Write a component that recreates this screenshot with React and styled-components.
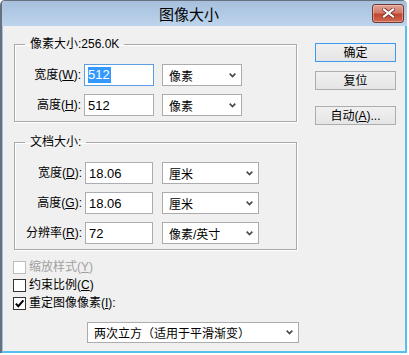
import React from "react";
import styled, { createGlobalStyle } from "styled-components";

const GlobalStyle = createGlobalStyle`
  body {
    margin: 0;
    background: #ffffff;
    font-family: "Liberation Sans", "Noto Sans CJK SC", sans-serif;
    font-size: 12px;
    color: #000;
  }
`;

const Chevron = () => (
  <svg width="7" height="5" viewBox="0 0 7 5">
    <path d="M0.7 0.7 L3.5 3.6 L6.3 0.7" fill="none" stroke="#4a4a4a" strokeWidth="1.7" />
  </svg>
);

const CloseX = () => (
  <svg width="13" height="10" viewBox="0 0 13 10">
    <path d="M2 1.5 L11 8.5 M11 1.5 L2 8.5" stroke="#6b2a22" strokeWidth="3.6" strokeLinecap="square" />
    <path d="M2 1.5 L11 8.5 M11 1.5 L2 8.5" stroke="#ffffff" strokeWidth="2.2" strokeLinecap="square" />
  </svg>
);

const Tick = () => (
  <svg width="11" height="11" viewBox="0 0 11 11">
    <path d="M1.8 5.6 L4.3 8.2 L9.4 2.4" fill="none" stroke="#000" strokeWidth="2" />
  </svg>
);

const App = () => {
  return (
    <>
      <GlobalStyle />
      <Window>
        <TitleBar>
          <Title>图像大小</Title>
          <CloseButton>
            <CloseX />
          </CloseButton>
        </TitleBar>
        <Body>
          <LeftCol>
            <Group>
              <Legend>像素大小:256.0K</Legend>
              <Row>
                <Label $w={66}>
                  宽度(<U>W</U>):
                </Label>
                <TextBox $w={70} $focused>
                  <Selected>512</Selected>
                </TextBox>
                <Select $w={80} $ml={8}>
                  <span>像素</span>
                  <Chevron />
                </Select>
              </Row>
              <Row>
                <Label $w={66}>
                  高度(<U>H</U>):
                </Label>
                <TextBox $w={70}>512</TextBox>
                <Select $w={80} $ml={8}>
                  <span>像素</span>
                  <Chevron />
                </Select>
              </Row>
            </Group>

            <Group $mt={12}>
              <Legend>文档大小:</Legend>
              <Row>
                <Label $w={67}>
                  宽度(<U>D</U>):
                </Label>
                <TextBox $w={68}>18.06</TextBox>
                <Select $w={97} $ml={9}>
                  <span>厘米</span>
                  <Chevron />
                </Select>
              </Row>
              <Row>
                <Label $w={67}>
                  高度(<U>G</U>):
                </Label>
                <TextBox $w={68}>18.06</TextBox>
                <Select $w={97} $ml={9}>
                  <span>厘米</span>
                  <Chevron />
                </Select>
              </Row>
              <Row>
                <Label $w={67}>
                  分辨率(<U>R</U>):
                </Label>
                <TextBox $w={68}>72</TextBox>
                <Select $w={97} $ml={9}>
                  <span>像素/英寸</span>
                  <Chevron />
                </Select>
              </Row>
            </Group>

            <Checks>
              <CheckRow $disabled>
                <Box $disabled />
                <span>
                  缩放样式(<U>Y</U>)
                </span>
              </CheckRow>
              <CheckRow>
                <Box />
                <span>
                  约束比例(<U>C</U>)
                </span>
              </CheckRow>
              <CheckRow>
                <Box>
                  <Tick />
                </Box>
                <span>
                  重定图像像素(<U>I</U>):
                </span>
              </CheckRow>
            </Checks>

            <Select $w={212} $ml={73} $h={21} $mt={10}>
              <span>两次立方（适用于平滑渐变）</span>
              <Chevron />
            </Select>
          </LeftCol>

          <RightCol>
            <Button $default>确定</Button>
            <Button $mt={9}>复位</Button>
            <Button $mt={16}>
              自动(<U>A</U>)...
            </Button>
          </RightCol>
        </Body>
      </Window>
    </>
  );
};

export default App;

const Window = styled.div`
  width: 407px;
  height: 353px;
  box-sizing: border-box;
  display: flex;
  flex-direction: column;
  border-left: 2px solid #66717e;
  border-top: 1px solid #66717e;
  border-radius: 5px 5px 0 0;
  overflow: hidden;
`;

const TitleBar = styled.div`
  flex: none;
  height: 25px;
  display: flex;
  align-items: center;
  background: linear-gradient(to bottom, #a6c0dd, #bdd4ec);
`;

const Title = styled.div`
  flex: 1;
  text-align: center;
  padding-left: 4px;
  font-family: "Noto Sans CJK SC", sans-serif;
  font-size: 15px;
  line-height: 20px;
`;

const CloseButton = styled.div`
  width: 32px;
  height: 19px;
  margin-right: 3px;
  margin-top: -1px;
  box-sizing: border-box;
  border: 1px solid #6e3a36;
  border-radius: 3px;
  display: flex;
  align-items: center;
  justify-content: center;
  background: linear-gradient(to bottom, #e2a396 0%, #d37a68 45%, #c2452f 55%, #cf6a52 100%);
  box-shadow: inset 0 0 0 1px rgba(255, 210, 200, 0.45);
`;

const Body = styled.div`
  flex: 1;
  display: flex;
  align-items: flex-start;
  padding-left: 11px;
  background: #f0f0f0;
  border-left: 1px solid #a3bfdc;
  border-right: 2px solid #57c1ee;
  border-bottom: 2px solid #57c1ee;
`;

const LeftCol = styled.div`
  width: 283px;
  padding-top: 10px;
  display: flex;
  flex-direction: column;
`;

const RightCol = styled.div`
  margin-top: 17px;
  margin-left: 18px;
  display: flex;
  flex-direction: column;
`;

const Group = styled.fieldset`
  margin: ${(p) => p.$mt || 0}px 0 0 0;
  width: 283px;
  box-sizing: border-box;
  padding: 12px 0 5px 0;
  border: 1px solid #a9a9a9;
  box-shadow: 1px 1px 0 #ffffff, inset 1px 1px 0 #ffffff;
  display: flex;
  flex-direction: column;
  gap: 8px;
`;

const Legend = styled.legend`
  margin-left: 10px;
  padding: 0 5px;
  line-height: 16px;
  font-size: 12px;
`;

const Row = styled.div`
  display: flex;
  align-items: center;
  height: 22px;
`;

const Label = styled.div`
  width: ${(p) => p.$w}px;
  margin-right: 3px;
  text-align: right;
  white-space: nowrap;
  line-height: 16px;
`;

const U = styled.span`
  text-decoration: underline;
`;

const TextBox = styled.div`
  width: ${(p) => p.$w}px;
  height: 22px;
  box-sizing: border-box;
  padding-left: 3px;
  display: flex;
  align-items: center;
  background: #ffffff;
  border: 1px solid ${(p) => (p.$focused ? "#5a9fe2" : "#abadb3")};
  font-size: 13px;
`;

const Selected = styled.span`
  background: #3399ff;
  color: #ffffff;
  line-height: 16px;
  padding-right: 1px;
`;

const Select = styled.div`
  width: ${(p) => p.$w}px;
  height: ${(p) => p.$h || 22}px;
  margin-left: ${(p) => p.$ml || 0}px;
  margin-top: ${(p) => p.$mt || 0}px;
  box-sizing: border-box;
  padding: 0 5px 0 6px;
  display: flex;
  align-items: center;
  justify-content: space-between;
  background: #ffffff;
  border: 1px solid #acacac;
  font-size: 12px;
  white-space: nowrap;
`;

const Checks = styled.div`
  margin-top: 8px;
  display: flex;
  flex-direction: column;
`;

const CheckRow = styled.div`
  height: 18px;
  margin-left: -1px;
  display: flex;
  align-items: center;
  gap: 3px;
  color: ${(p) => (p.$disabled ? "#a0a0a0" : "#000")};
  line-height: 16px;
`;

const Box = styled.div`
  width: 13px;
  height: 13px;
  box-sizing: border-box;
  display: flex;
  align-items: center;
  justify-content: center;
  background: #ffffff;
  border: 1px solid ${(p) => (p.$disabled ? "#bcbcbc" : "#333333")};
`;

const Button = styled.div`
  width: 81px;
  height: 19px;
  margin-top: ${(p) => p.$mt || 0}px;
  box-sizing: border-box;
  display: flex;
  align-items: center;
  justify-content: center;
  border: 1px solid ${(p) => (p.$default ? "#3c9bf0" : "#adadad")};
  background: linear-gradient(to bottom, #f0f0f0, #e5e5e5);
  font-size: 12px;
  line-height: 16px;
`;
